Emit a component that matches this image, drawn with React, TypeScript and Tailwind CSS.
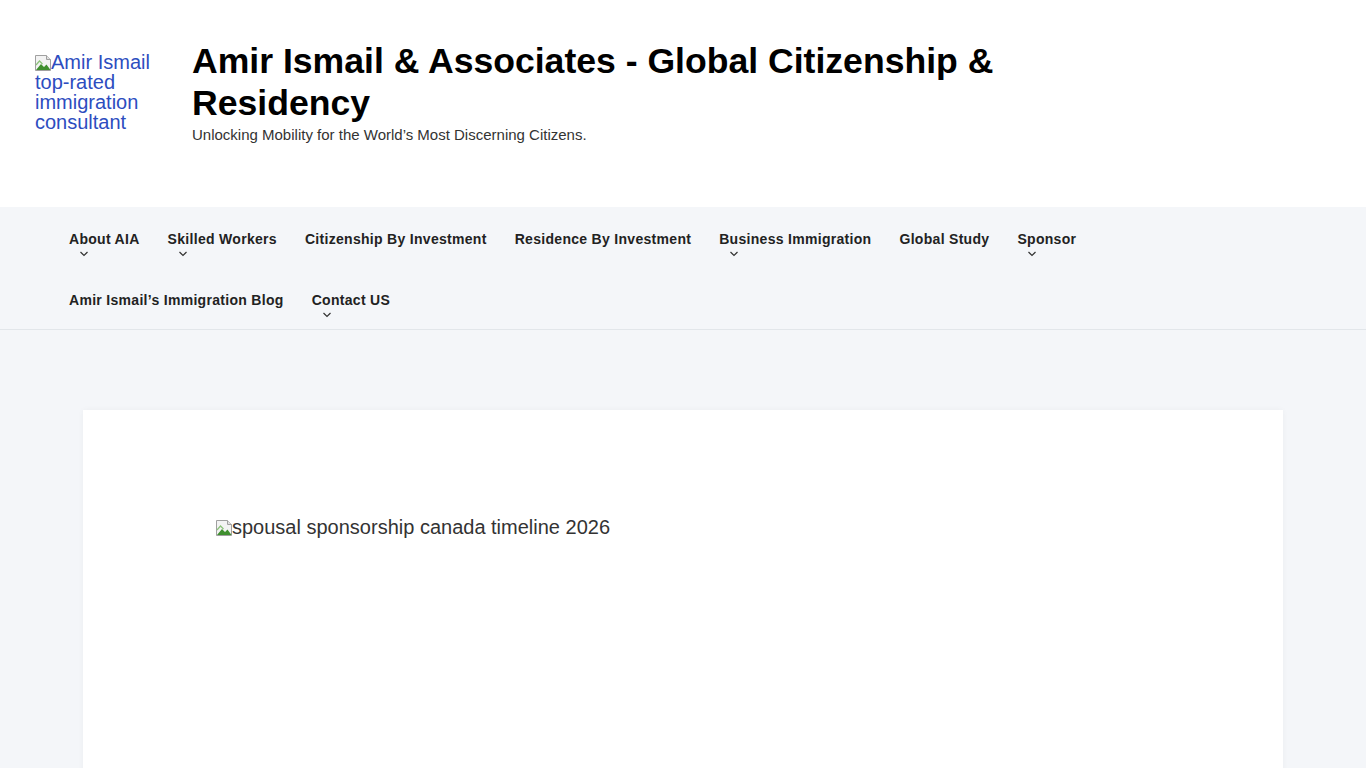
const font = { fontFamily: '"Liberation Sans", Arial, sans-serif' };

function BrokenImage() {
  return (
    <svg width="16" height="16" viewBox="0 0 16 16" className="inline-block align-[-2px]">
      <path d="M0.5 0.5h11l4 4v11h-15z" fill="#f3f3f3" stroke="#a0a0a0" />
      <path d="M11.5 0.5v4h4" fill="#e0e0e0" stroke="#a0a0a0" />
      <path d="M1 15l5-6 3 3 2.5-2.5 4 5.5z" fill="#3f8f2e" />
      <path d="M1 10l3.5-4 3 3" fill="none" stroke="#8cc27a" strokeWidth="1.2" />
    </svg>
  );
}

function Chevron() {
  return (
    <svg width="10" height="6" viewBox="0 0 10 6" className="block">
      <path d="M1.5 1l3.5 3.5L8.5 1" fill="none" stroke="#333" strokeWidth="1.2" />
    </svg>
  );
}

const menu = [
  { label: 'About AIA', sub: true },
  { label: 'Skilled Workers', sub: true },
  { label: 'Citizenship By Investment', sub: false },
  { label: 'Residence By Investment', sub: false },
  { label: 'Business Immigration', sub: true },
  { label: 'Global Study', sub: false },
  { label: 'Sponsor', sub: true },
  { label: 'Amir Ismail’s Immigration Blog', sub: false },
  { label: 'Contact US', sub: true },
];

export default function App() {
  return (
    <div className="min-h-screen bg-[#f4f6f9]" style={font}>
      <header className="bg-white h-[207px] flex items-start pl-[35px] pt-[40px]">
        <a className="block w-[140px] pt-[12px] text-[20px] leading-[20px] text-[#2d4dbf]">
          <BrokenImage />Amir Ismail top-rated immigration consultant
        </a>
        <div className="ml-[17px] max-w-[860px]">
          <h1 className="text-[35.6px] leading-[42px] font-bold text-black">
            Amir Ismail &amp; Associates - Global Citizenship &amp; Residency
          </h1>
          <p className="text-[15px] leading-[22px] text-[#333]">
            Unlocking Mobility for the World’s Most Discerning Citizens.
          </p>
        </div>
      </header>

      <nav className="border-b border-[#e2e6ea] px-[55px]">
        <ul className="flex flex-wrap max-w-[1256px]">
          {menu.map((item) => (
            <li key={item.label} className="h-[61px] px-[14px] pt-[24px]">
              <span className="block text-[14px] leading-[16px] font-bold tracking-[0.3px] text-[#222]">
                {item.label}
              </span>
              {item.sub && (
                <span className="block ml-[10px] mt-[4px]">
                  <Chevron />
                </span>
              )}
            </li>
          ))}
        </ul>
      </nav>

      <main className="px-[83px] pt-[80px]">
        <div className="bg-white shadow-[0_0_6px_rgba(0,0,0,0.04)] h-[400px] px-[133px] pt-[106px]">
          <p className="text-[20px] leading-[22px] text-[#333]">
            <BrokenImage />spousal sponsorship canada timeline 2026
          </p>
        </div>
      </main>
    </div>
  );
}
